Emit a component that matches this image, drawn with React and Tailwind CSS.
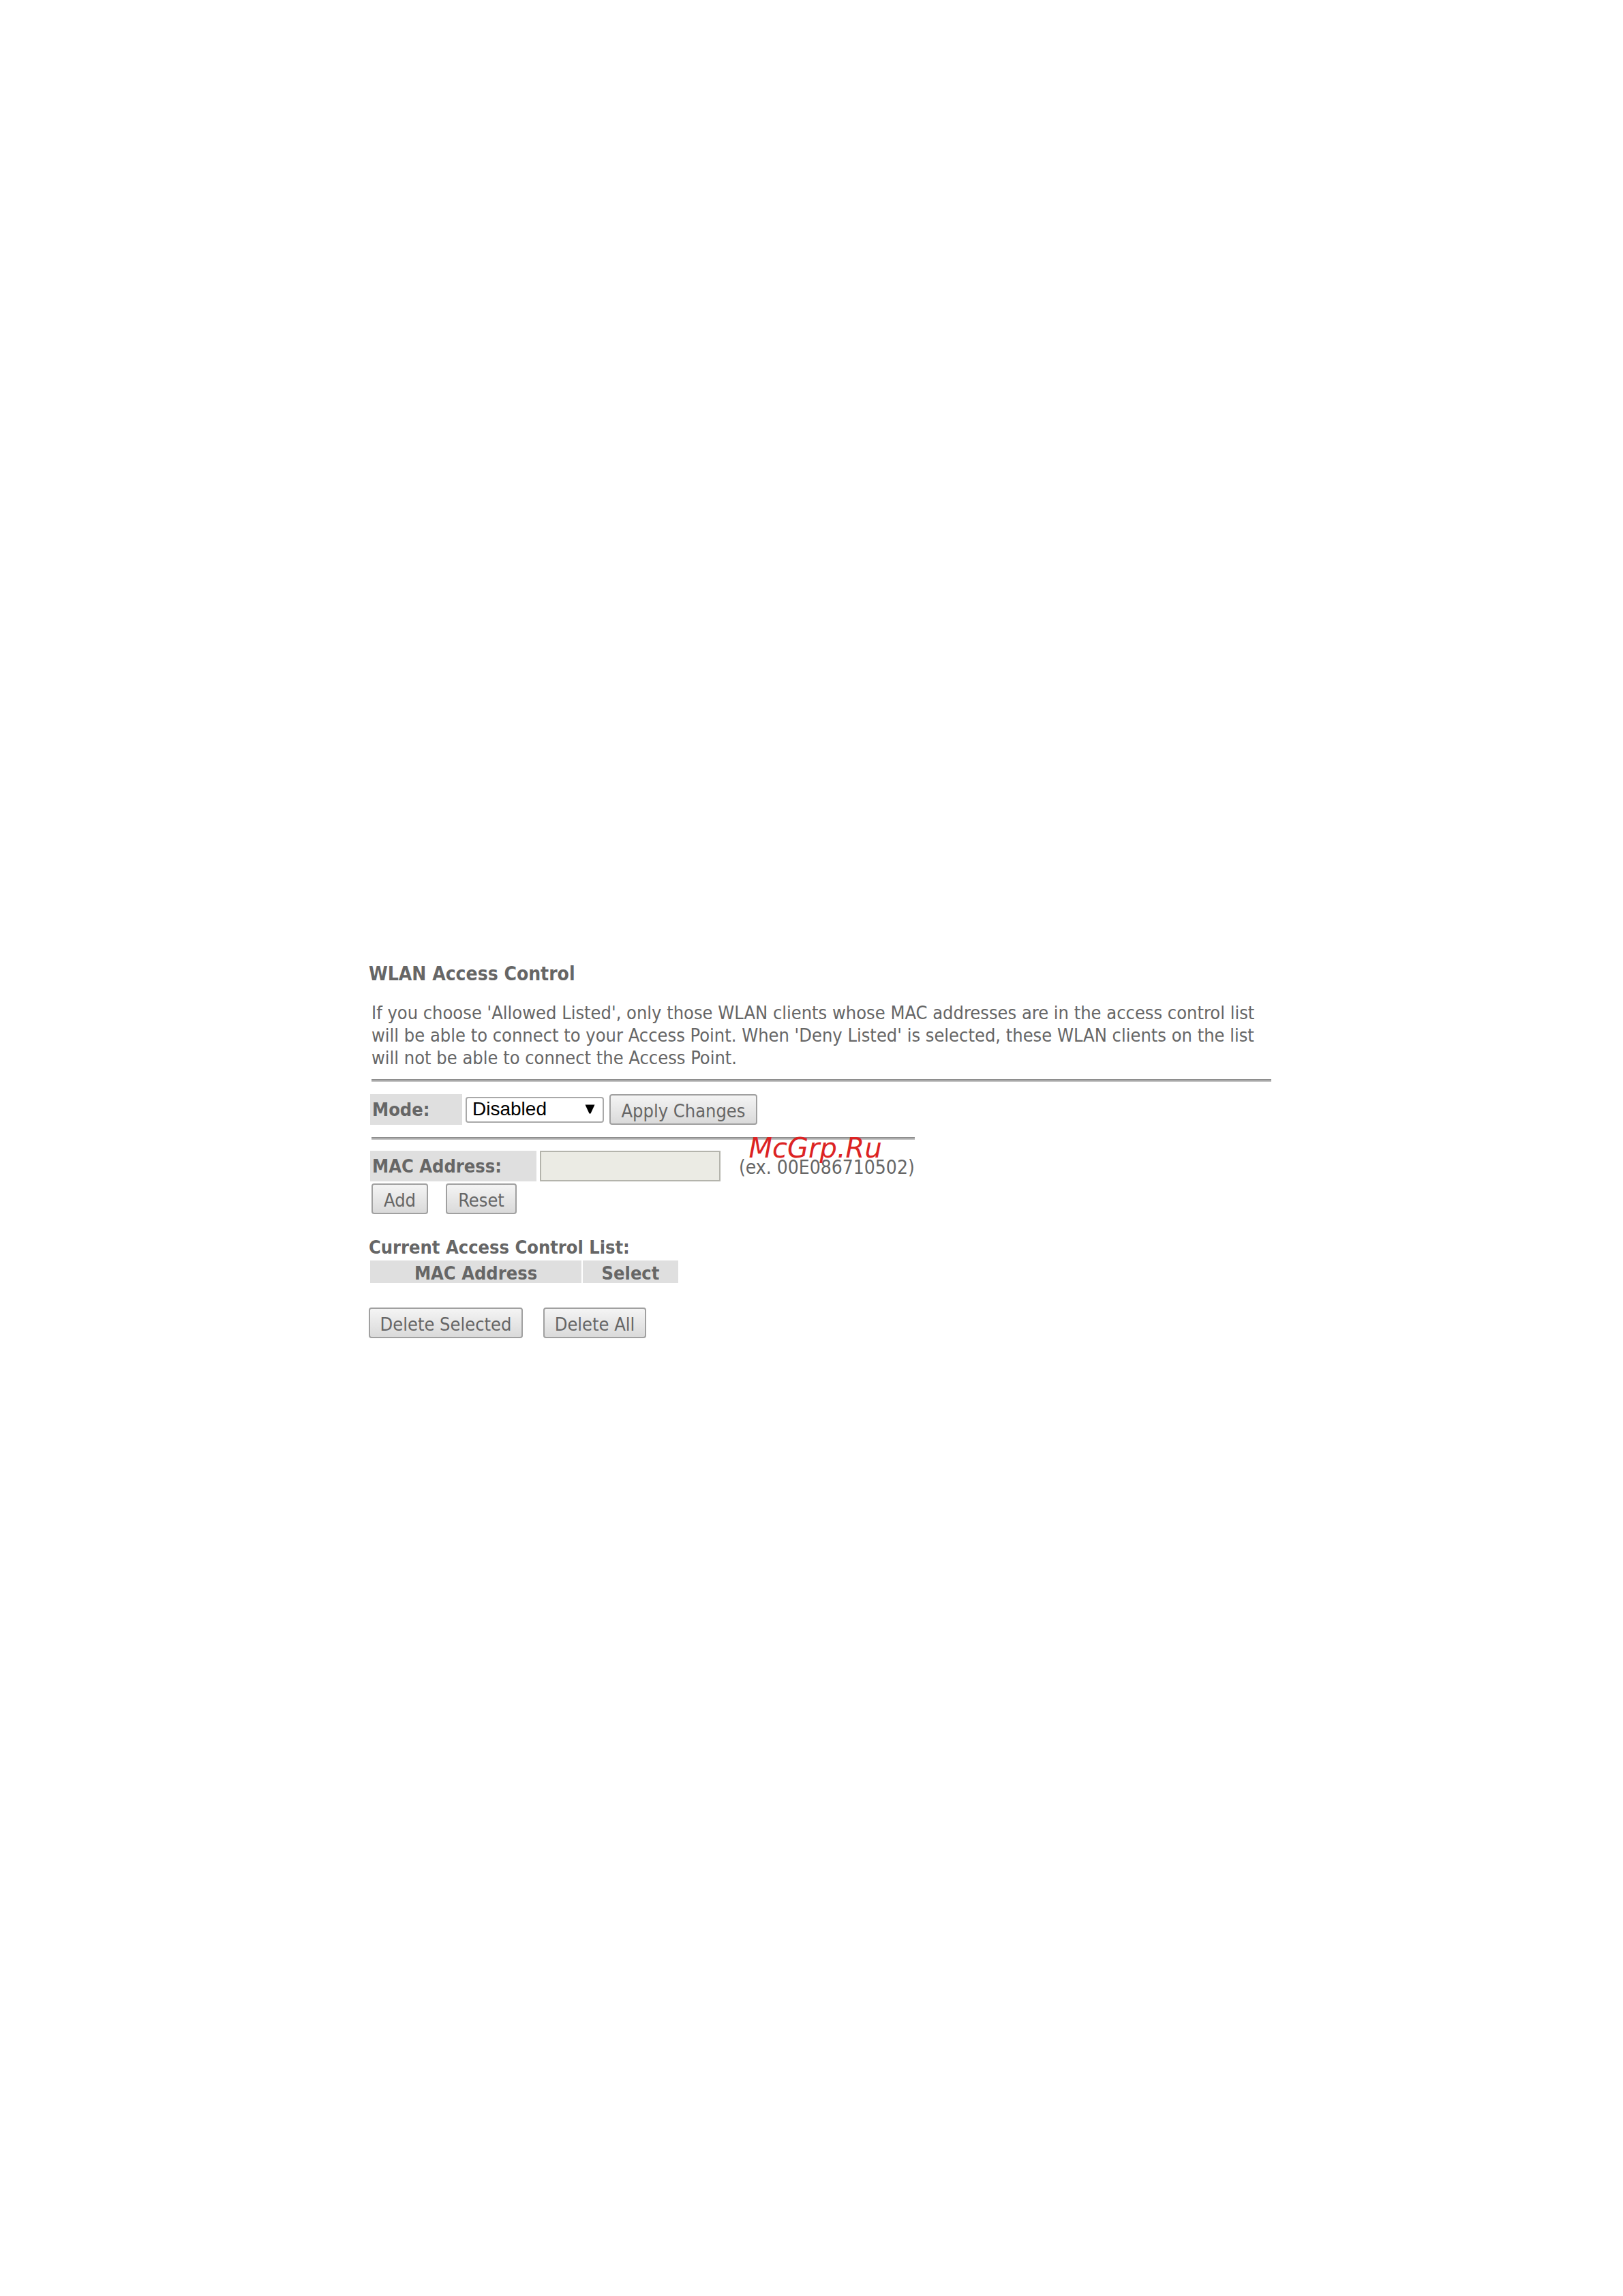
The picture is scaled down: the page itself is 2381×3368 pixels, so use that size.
import React, { useState } from 'react';

const Button = ({ className = '', ...props }) => (
  <button
    type="button"
    className={`h-[45px] pt-1 border-2 border-[#a0a0a0] rounded-[4px] bg-linear-to-b from-[#f4f4f4] to-[#dadada] text-center whitespace-nowrap ${className}`}
    {...props}
  />
);

const Rule = ({ className = '' }) => (
  <hr className={`h-[4px] border-0 border-t-2 border-t-[#8e8e8e] bg-[#c4c4c4] ${className}`} />
);

const App = () => {
  const [mode, setMode] = useState('Disabled');
  const [mac, setMac] = useState('');

  return (
    <main className="min-h-screen bg-white pt-[1412px] pl-[541px] pr-[516px] pb-20 font-['DejaVu_Sans_Condensed',sans-serif] text-[27px] leading-[33px] text-[#666666]">
      <h1 className="text-[28px] font-bold">WLAN Access Control</h1>

      <p className="mt-6 ml-1 whitespace-nowrap">
        If you choose 'Allowed Listed', only those WLAN clients whose MAC addresses are in the access control list
        <br />
        will be able to connect to your Access Point. When 'Deny Listed' is selected, these WLAN clients on the list
        <br />
        will not be able to connect the Access Point.
      </p>

      <Rule className="mt-[15px] ml-1" />

      {/* Mode */}
      <div className="mt-[18px] ml-[2px] flex items-center">
        <label htmlFor="mode" className="w-[135px] h-[45px] pt-[6px] pl-[3px] bg-[#dfdfdf] font-bold">
          Mode:
        </label>
        <div className="relative ml-[5px]">
          <select
            id="mode"
            value={mode}
            onChange={e => setMode(e.target.value)}
            className="block w-[203px] h-[38px] pl-2 pb-[2px] appearance-none border-2 border-[#a9a9a9] rounded-[4px] bg-white font-['Liberation_Sans',sans-serif] text-[28px] leading-8 text-black"
          >
            <option>Disabled</option>
            <option>Allow Listed</option>
            <option>Deny Listed</option>
          </select>
          <svg className="absolute right-[13px] top-[11px] w-[15px] h-[14px] pointer-events-none" viewBox="0 0 15 14">
            <path d="M0.500 0.500h14L8.500 13.500h-2z" fill="#000" />
          </svg>
        </div>
        <Button className="ml-2 w-[217px]">Apply Changes</Button>
      </div>

      <div className="w-fit ml-[2px]">
        <Rule className="mt-[18px] ml-[2px]" />

        {/* MAC address */}
        <div className="relative mt-4 flex items-center">
          <label htmlFor="mac" className="w-[244px] h-[45px] pt-[6px] pl-[3px] bg-[#dfdfdf] font-bold">
            MAC Address:
          </label>
          <input
            id="mac"
            type="text"
            maxLength={12}
            value={mac}
            onChange={e => setMac(e.target.value)}
            className="ml-[5px] w-[265px] h-[45px] px-2 border-2 border-[#b4b4ac] bg-[#ebebe4]"
          />
          <span className="ml-[27px] pt-1 text-[28px]">(ex. 00E086710502)</span>
          <span className="absolute right-12 -top-7 font-['DejaVu_Sans',sans-serif] text-[40px] leading-[48px] italic text-[#dc2323]">
            McGrp.Ru
          </span>
        </div>
      </div>

      <div className="mt-[3px] ml-1 flex gap-[26px]">
        <Button className="w-[83px]">Add</Button>
        <Button className="w-[104px]" onClick={() => setMac('')}>Reset</Button>
      </div>

      <h2 className="mt-8 font-bold">Current Access Control List:</h2>
      <table className="mt-[3px] ml-[2px] border-collapse">
        <thead>
          <tr className="bg-[#dfdfdf] leading-[29px]">
            <th className="w-[311px] p-0 pt-1 border-r-2 border-white font-bold">MAC Address</th>
            <th className="w-[141px] p-0 pt-1 font-bold">Select</th>
          </tr>
        </thead>
      </table>

      <div className="mt-9 flex gap-[30px]">
        <Button className="w-[226px]">Delete Selected</Button>
        <Button className="w-[151px]">Delete All</Button>
      </div>
    </main>
  );
};

export default App;
